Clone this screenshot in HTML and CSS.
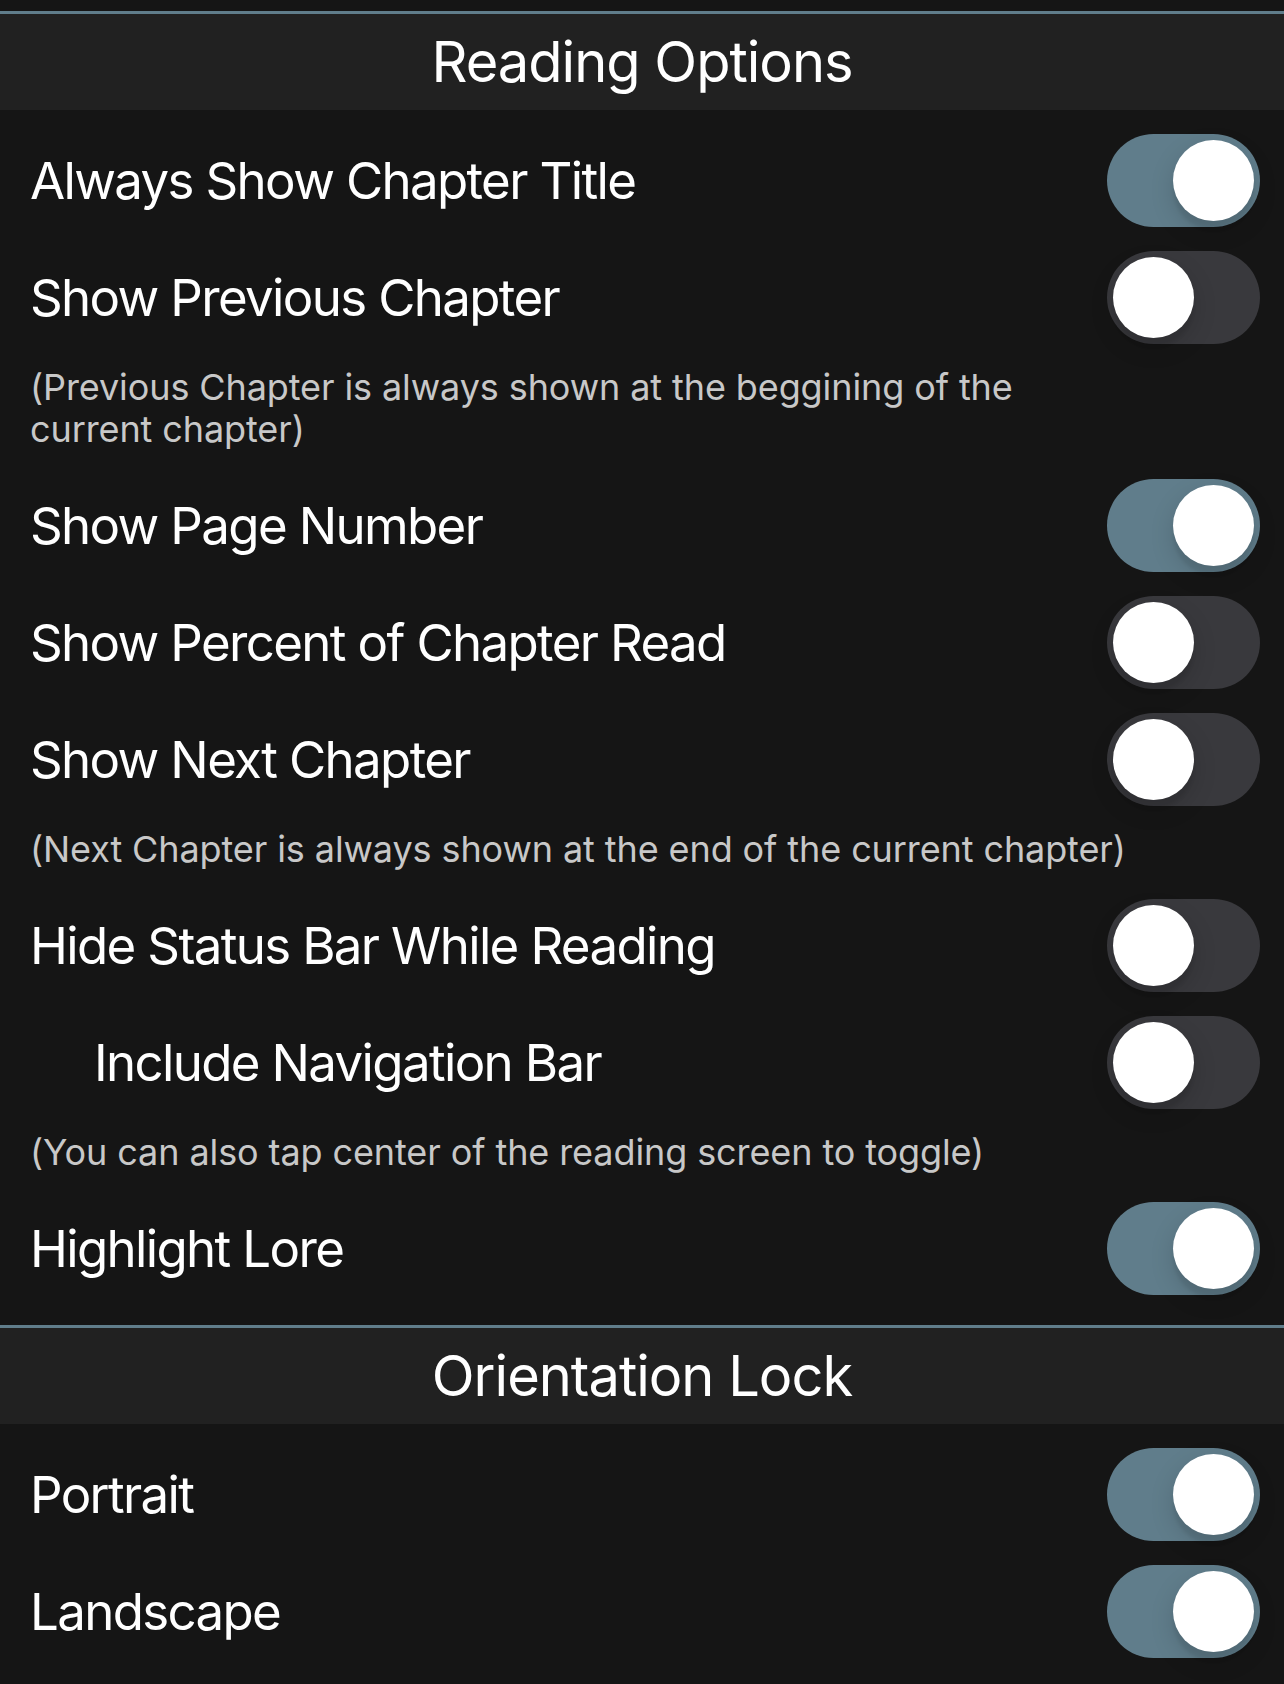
FILE: index.html
```html
<!DOCTYPE html>
<html lang="en">
<head>
<meta charset="utf-8">
<title>Reading Options</title>
<link rel="stylesheet" href="styles.css">
</head>
<body>
<div class="screen">
  <section class="section">
    <h2 class="section-title">Reading Options</h2>
    <div class="list">
      <div class="row"><span class="label">Always Show Chapter Title</span><span class="switch on"><span class="knob"></span></span></div>
      <div class="row"><span class="label">Show Previous Chapter</span><span class="switch"><span class="knob"></span></span></div>
      <p class="note">(Previous Chapter is always shown at the beggining of the<br>current chapter)</p>
      <div class="row"><span class="label">Show Page Number</span><span class="switch on"><span class="knob"></span></span></div>
      <div class="row"><span class="label">Show Percent of Chapter Read</span><span class="switch"><span class="knob"></span></span></div>
      <div class="row"><span class="label">Show Next Chapter</span><span class="switch"><span class="knob"></span></span></div>
      <p class="note">(Next Chapter is always shown at the end of the current chapter)</p>
      <div class="row"><span class="label">Hide Status Bar While Reading</span><span class="switch"><span class="knob"></span></span></div>
      <div class="row indent"><span class="label">Include Navigation Bar</span><span class="switch"><span class="knob"></span></span></div>
      <p class="note">(You can also tap center of the reading screen to toggle)</p>
      <div class="row"><span class="label">Highlight Lore</span><span class="switch on"><span class="knob"></span></span></div>
    </div>
  </section>
  <section class="section">
    <h2 class="section-title">Orientation Lock</h2>
    <div class="list">
      <div class="row"><span class="label">Portrait</span><span class="switch on"><span class="knob"></span></span></div>
      <div class="row"><span class="label">Landscape</span><span class="switch on"><span class="knob"></span></span></div>
    </div>
  </section>
</div>
</body>
</html>
```
FILE: styles.css
```css
html, body {
  margin: 0;
  padding: 0;
  background: #151515;
}
body {
  font-family: Inter, "Noto Sans", "Liberation Sans", sans-serif;
  color: #ffffff;
}
.screen {
  padding-top: 11px;
  min-height: 1684px;
  box-sizing: border-box;
}
.section-title {
  margin: 0;
  height: 96px;
  border-top: 3px solid #607d8b;
  background: #212121;
  display: flex;
  align-items: center;
  justify-content: center;
  font-size: 56px;
  font-weight: 400;
  letter-spacing: -1px;
}
.list {
  padding: 12px 0 18px;
}
.row {
  height: 117px;
  display: flex;
  align-items: center;
  justify-content: space-between;
  padding: 0 24px 0 30px;
}
.row.indent {
  padding-left: 94px;
}
.label {
  font-size: 51px;
  letter-spacing: -1.65px;
  white-space: nowrap;
}
.note {
  margin: 0;
  padding: 10px 100px 17px 30px;
  font-size: 36px;
  line-height: 42px;
  color: #c8c8c8;
  letter-spacing: -0.1px;
  white-space: nowrap;
}
.switch {
  position: relative;
  flex: none;
  width: 153px;
  height: 93px;
  border-radius: 47px;
  background: #39393d;
}
.switch.on {
  background: #607d8b;
}
.knob {
  position: absolute;
  top: 6px;
  left: 6px;
  width: 81px;
  height: 81px;
  border-radius: 50%;
  background: #ffffff;
  box-shadow: 0 9px 24px rgba(0, 0, 0, 0.15), 0 9px 3px rgba(0, 0, 0, 0.06);
}
.switch.on .knob {
  left: 66px;
}
```
